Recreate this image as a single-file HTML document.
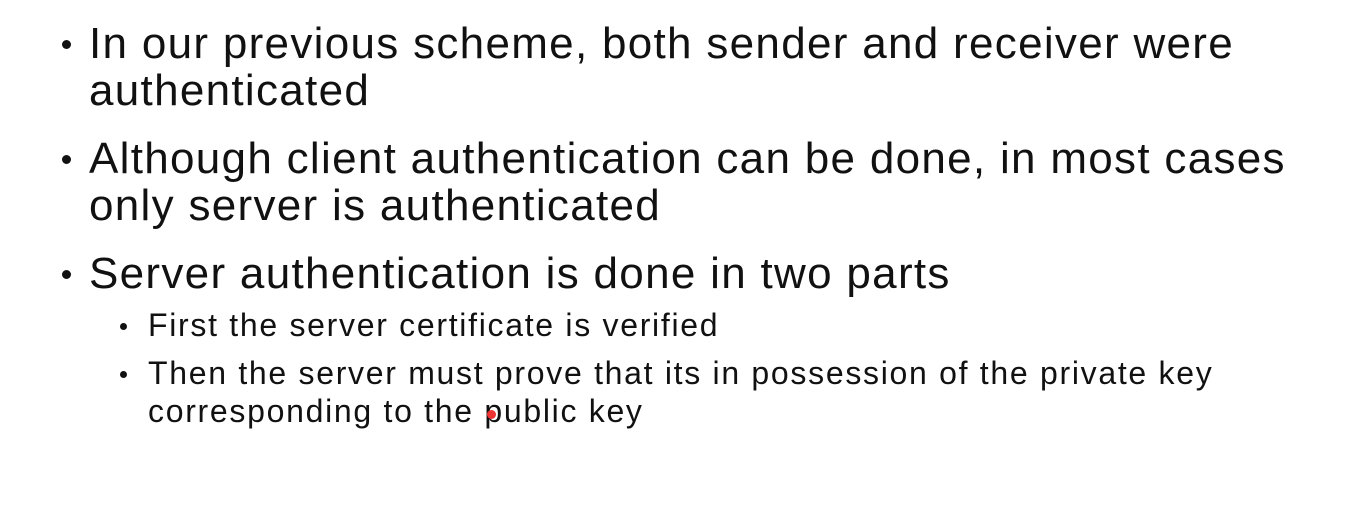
<!DOCTYPE html>
<html><head><style>
body{margin:0;width:1362px;height:515px;background:#fff;overflow:hidden;font-family:"Liberation Sans",sans-serif;color:#111;position:relative}
.t{position:absolute;white-space:nowrap}
.m{font-size:44px;left:89px;letter-spacing:1.3px}
.s{font-size:32px;left:148px;letter-spacing:1.7px}
.b{position:absolute;border-radius:50%;background:#111}
</style></head><body>
<div class="b" style="left:62px;top:40px;width:9px;height:9px"></div>
<div class="t m" style="top:19px">In our previous scheme, both sender and receiver were</div>
<div class="t m" style="top:66px">authenticated</div>
<div class="b" style="left:62px;top:155px;width:9px;height:9px"></div>
<div class="t m" style="top:134px">Although client authentication can be done, in most cases</div>
<div class="t m" style="top:181px">only server is authenticated</div>
<div class="b" style="left:62px;top:270px;width:9px;height:9px"></div>
<div class="t m" style="top:249px">Server authentication is done in two parts</div>
<div class="b" style="left:120px;top:323px;width:7px;height:7px"></div>
<div class="t s" style="top:307px">First the server certificate is verified</div>
<div class="b" style="left:120px;top:371px;width:7px;height:7px"></div>
<div class="t s" style="top:355px">Then the server must prove that its in possession of the private key</div>
<div class="t s" style="top:393px">corresponding to the public key</div>
<div class="b" style="left:487px;top:410px;width:9px;height:9px;background:#e33"></div>
</body></html>
